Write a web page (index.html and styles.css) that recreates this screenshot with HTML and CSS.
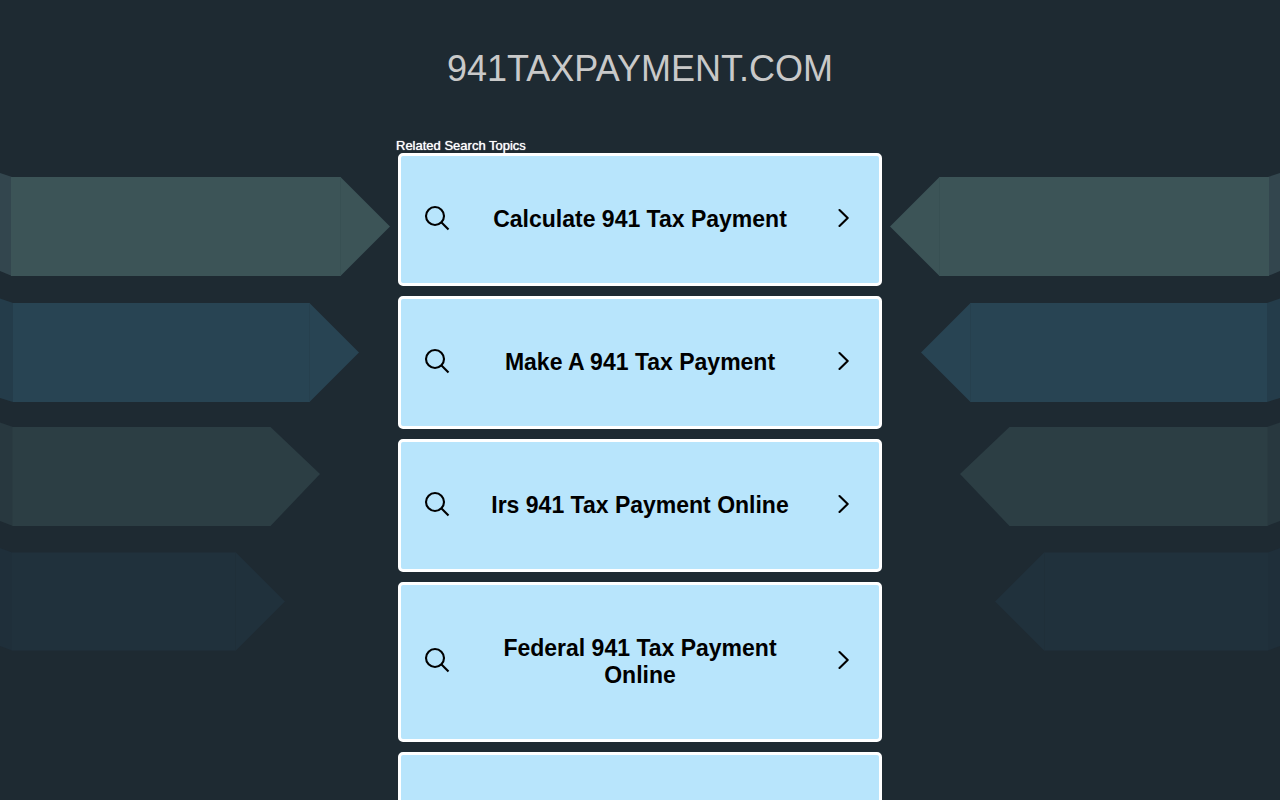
FILE: index.html
```html
<!DOCTYPE html>
<html lang="en">
<head>
<meta charset="utf-8">
<meta name="viewport" content="width=device-width, initial-scale=1">
<title>941taxpayment.com</title>
<link rel="stylesheet" href="styles.css">
</head>
<body>
<svg class="symbols" aria-hidden="true">
  <symbol id="search" viewBox="0 0 26 26">
    <circle cx="11" cy="11" r="9" fill="none" stroke="currentColor" stroke-width="2.1"/>
    <path d="M17.3 17.3L24.500 24.500" stroke="currentColor" stroke-width="2.1"/>
  </symbol>
  <symbol id="chevron" viewBox="0 0 12 20">
    <path d="M2.500 2L10.700 10L2.500 18" fill="none" stroke="currentColor" stroke-width="2.1" stroke-linecap="round" stroke-linejoin="round"/>
  </symbol>
  <symbol id="ribbons" viewBox="0 0 390 500">
    <path fill="#33464e" d="M0 13L12 17V116L0 111z"/>
    <path fill="#3c5457" d="M11 17H340.500L390 66.500L340.500 116H11z"/>
    <path fill="#243c4a" d="M0 138.500L13 143V242L0 238z"/>
    <path fill="#284453" d="M13 143H309.500L359 192.500L309.500 242H13z"/>
    <path fill="#28383f" d="M0 262.500L13 267V366L0 361z"/>
    <path fill="#2c3e44" d="M12.500 267H270.500L320 314L270.500 366H12.500z"/>
    <path fill="#1f2f3a" d="M0 388L12 392.500V490.500L0 486z"/>
    <path fill="#20313c" d="M12 392.500H236L285 441.500L236 490.500H12z"/>
    <path fill="none" stroke="#385053" d="M340.500 17V116"/>
    <path fill="none" stroke="#26404e" d="M309.500 143V242"/>
    <path fill="none" stroke="#1f2f39" d="M235.500 393V490"/>
  </symbol>
</svg>
<div class="backdrop" aria-hidden="true">
  <svg class="ribbons"><use href="#ribbons"/></svg>
  <svg class="ribbons ribbons-right"><use href="#ribbons"/></svg>
</div>
<header class="header"><h1 class="domain">941TAXPAYMENT.COM</h1></header>
<main class="topics">
  <h2 class="label">Related Search Topics</h2>
  <ul class="list">
    <li><a class="card" href="#calculate"><svg class="search"><use href="#search"/></svg><span class="text">Calculate 941 Tax Payment</span><svg class="chevron"><use href="#chevron"/></svg></a></li>
    <li><a class="card" href="#make"><svg class="search"><use href="#search"/></svg><span class="text">Make A 941 Tax Payment</span><svg class="chevron"><use href="#chevron"/></svg></a></li>
    <li><a class="card" href="#irs"><svg class="search"><use href="#search"/></svg><span class="text">Irs 941 Tax Payment Online</span><svg class="chevron"><use href="#chevron"/></svg></a></li>
    <li><a class="card" href="#federal"><svg class="search"><use href="#search"/></svg><span class="text">Federal 941 Tax Payment Online</span><svg class="chevron"><use href="#chevron"/></svg></a></li>
    <li><a class="card" href="#more"><svg class="search"><use href="#search"/></svg><span class="text"></span><svg class="chevron"><use href="#chevron"/></svg></a></li>
  </ul>
</main>
</body>
</html>
```
FILE: styles.css
```css
* { box-sizing: border-box; }
html { height: 100%; }
body {
  height: 100%;
  margin: 0;
  overflow: hidden;
  background: #1e2a32;
  font-family: "Liberation Sans", Arial, sans-serif;
}
.symbols { position: absolute; width: 0; height: 0; }
.backdrop {
  position: absolute;
  inset: 160px 0 auto;
  z-index: -1;
  display: flex;
  justify-content: space-between;
}
.ribbons { width: 390px; height: 500px; }
.ribbons-right { transform: scaleX(-1); }
.header { padding: 48px 16px; }
.domain {
  margin: 0;
  color: #c9c9c9;
  font-size: 36px;
  font-weight: 400;
  line-height: 42px;
  text-align: center;
}
.topics { max-width: 488px; margin: 0 auto; }
.label {
  margin: 0;
  color: #fff;
  font-size: 13px;
  font-weight: 400;
  line-height: 15px;
  text-shadow: 0 0 1px #fff;
}
.list {
  display: flex;
  flex-direction: column;
  gap: 10px;
  margin: 0;
  padding: 0 2px;
  list-style: none;
}
.card {
  display: flex;
  align-items: center;
  padding: 50px 30px 50px 23px;
  border: 3px solid #fff;
  border-radius: 5px;
  background: #b8e5fc;
  color: #000;
  font-size: 23px;
  font-weight: 700;
  line-height: 27px;
  text-decoration: none;
}
.text {
  flex: 1;
  min-height: 27px;
  padding: 0 23px 0 16px;
  text-align: center;
}
.search { width: 26px; height: 26px; }
.chevron { width: 12px; height: 20px; }
.search, .chevron { flex: none; margin-top: -4px; }
```
